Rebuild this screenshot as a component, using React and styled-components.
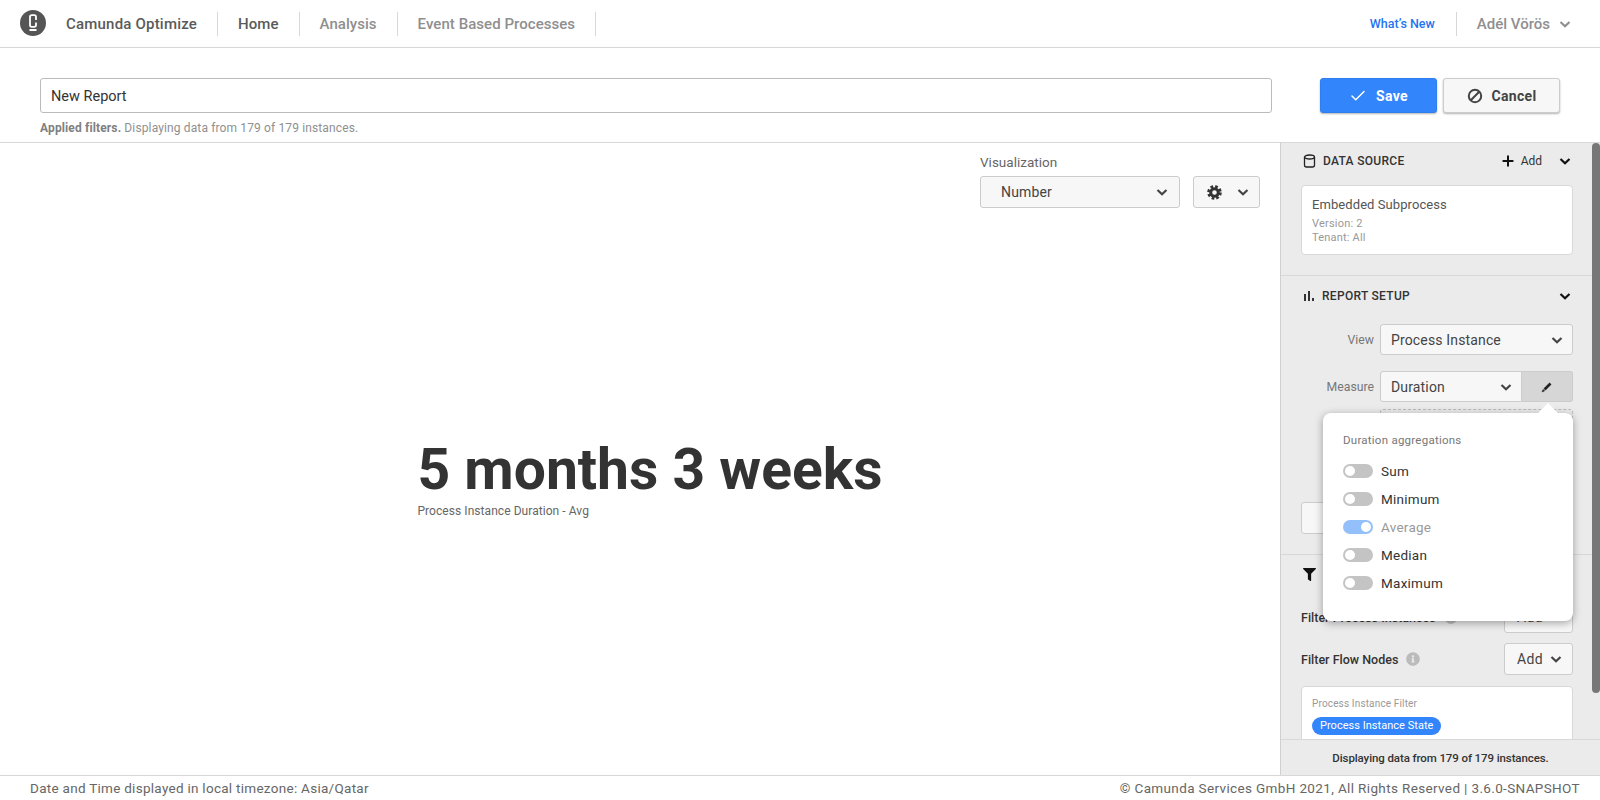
import React from "react";
import styled, { createGlobalStyle } from "styled-components";
import { Check, Plus } from "lucide-react";
import { FaFilter, FaInfoCircle } from "react-icons/fa";

const GlobalStyle = createGlobalStyle`
    * { box-sizing: border-box; }
    html, body { margin: 0; padding: 0; height: 100%; }
    body {
        font-family: Roboto, "Noto Sans", sans-serif;
        color: #333;
        background: #fff;
        overflow: hidden;
    }
`;

const Page = styled.div`
    display: flex;
    flex-direction: column;
    height: 800px;
`,
Header = styled.header`
    display: flex;
    align-items: center;
    height: 48px;
    flex: none;
    border-bottom: 1px solid #d8d8d8;
    padding: 0 28px 0 20px;
`,
Logo = styled.svg`
    width: 26px;
    height: 26px;
    margin-right: 20px;
    margin-top: -2px;
`,
Brand = styled.span`
    font-size: 15px;
    font-weight: 500;
    color: #5a5a5a;
    padding-right: 20px;
    letter-spacing: .2px;
`,
NavItem = styled.a`
    display: flex;
    align-items: center;
    height: 24px;
    padding: 0 20px;
    border-left: 1px solid #d8d8d8;
    font-size: 15px;
    font-weight: 500;
    letter-spacing: .05px;
    color: ${p => (p.$active ? "#5a5a5a" : "#8f8f8f")};
    &:last-of-type { border-right: 1px solid #d8d8d8; }
`,
HeaderRight = styled.div`
    margin-left: auto;
    display: flex;
    align-items: center;
`,
WhatsNew = styled.a`
    color: #1f74f0;
    font-size: 12.5px;
    font-weight: 500;
    padding-right: 21px;
`,
UserMenu = styled.div`
    display: flex;
    align-items: center;
    gap: 8px;
    height: 24px;
    padding-left: 20px;
    border-left: 1px solid #d8d8d8;
    font-size: 15px;
    font-weight: 500;
    color: #8f8f8f;
`,
ReportBar = styled.div`
    display: flex;
    flex: none;
    height: 95px;
    padding: 30px 40px 0;
    border-bottom: 1px solid #d8d8d8;
`,
NameColumn = styled.div`
    flex: 1;
    margin-right: 48px;
`,
NameInput = styled.div`
    height: 35px;
    display: flex;
    align-items: center;
    padding: 1px 10px 0;
    font-size: 14.5px;
    color: #333;
    border: 1px solid #bbb;
    border-radius: 3px;
`,
AppliedNote = styled.div`
    margin-top: 8px;
    font-size: 12px;
    letter-spacing: .13px;
    color: #8f8f8f;
    b { font-weight: 700; color: #808080; }
`,
Button = styled.button`
    display: flex;
    align-items: center;
    justify-content: center;
    gap: 9px;
    width: 117px;
    height: 35px;
    margin-left: ${p => (p.$primary ? "0" : "6px")};
    font: 700 14px Roboto, sans-serif;
    letter-spacing: .3px;
    color: ${p => (p.$primary ? "#fff" : "#444")};
    background: ${p => (p.$primary ? "#3385fb" : "#f7f7f7")};
    border: 1px solid ${p => (p.$primary ? "#2f7ff0" : "#ccc")};
    border-radius: 3px;
    box-shadow: 0 1px 2px rgba(0, 0, 0, .3);
`,
Main = styled.div`
    flex: 1;
    display: flex;
    min-height: 0;
`,
Canvas = styled.div`
    flex: 1;
    display: flex;
    flex-direction: column;
    padding: 9px 20px 0;
    min-width: 0;
`,
VizControls = styled.div`
    align-self: flex-end;
    display: grid;
    grid-template-columns: 200px 67px;
    column-gap: 13px;
`,
VizLabel = styled.label`
    grid-column: 1 / 3;
    font-size: 13.5px;
    color: #666;
    height: 24px;
    line-height: 20px;
`,
Select = styled.div`
    display: flex;
    align-items: center;
    justify-content: space-between;
    height: ${p => p.$h || 31}px;
    flex: 1;
    padding: 0 ${p => p.$pr || 8}px 0 ${p => p.$pl || 10}px;
    font-size: 14px;
    letter-spacing: .15px;
    color: #444;
    background: #f7f7f7;
    border: 1px solid #ccc;
    border-radius: ${p => p.$radius || "3px"};
`,
NumberBlock = styled.div`
    align-self: center;
    margin: 232px 0 0 20px;
`,
BigNumber = styled.div`
    font-size: 57px;
    line-height: 60px;
    font-weight: 700;
    color: #333;
`,
NumberLabel = styled.div`
    margin-top: 4px;
    font-size: 12px;
    letter-spacing: .06px;
    color: #666;
`,
Sidebar = styled.aside`
    position: relative;
    flex: none;
    width: 320px;
    display: flex;
    flex-direction: column;
    background: #ebebeb;
    border-left: 1px solid #d0d0d0;
`,
ScrollArea = styled.div`
    flex: 1;
    display: flex;
    min-height: 0;
`,
Sections = styled.div`
    flex: 1;
    min-width: 0;
    overflow: hidden;
`,
Track = styled.div`
    flex: none;
    width: 8px;
`,
Thumb = styled.div`
    width: 8px;
    height: 550px;
    background: #777;
    border-radius: 4px;
`,
Section = styled.section`
    padding: ${p => p.$pt || 8}px 19px 20px 20px;
    border-bottom: 1px solid #d8d8d8;
    &:last-child { border-bottom: none; }
`,
SectionHead = styled.div`
    display: flex;
    align-items: center;
    height: 20px;
    margin-bottom: ${p => p.$mb || 14}px;
    font-size: 12px;
    font-weight: 500;
    color: #333;
    padding-left: 2px;
    svg { flex: none; }
`,
HeadTitle = styled.span`
    margin-left: 7px;
    letter-spacing: .3px;
`,
HeadAdd = styled.span`
    margin-left: auto;
    display: flex;
    align-items: center;
    gap: 5px;
    font-weight: 400;
    font-size: 12px;
    letter-spacing: 0;
    margin-right: 16px;
`,
HeadChevron = styled.span`
    display: flex;
    margin-left: ${p => (p.$auto ? "auto" : "0")};
    margin-right: 1px;
`,
SourceCard = styled.div`
    height: 70px;
    padding: 10px;
    background: #fff;
    border: 1px solid #d8d8d8;
    border-radius: 4px;
`,
SourceName = styled.div`
    font-size: 13px;
    color: #555;
    letter-spacing: .08px;
    line-height: 18px;
    margin-bottom: 3px;
`,
SourceMeta = styled.div`
    font-size: 11px;
    line-height: 14px;
    letter-spacing: .2px;
    color: #999;
`,
SetupRow = styled.div`
    display: flex;
    align-items: center;
    margin-bottom: 16px;
`,
SetupLabel = styled.span`
    width: 73px;
    margin-right: 6px;
    text-align: right;
    font-size: 12.25px;
    color: #777;
`,
PencilButton = styled.div`
    flex: none;
    width: 51px;
    height: 31px;
    display: flex;
    align-items: center;
    justify-content: center;
    background: #d6d6d6;
    border: 1px solid #ccc;
    border-left: none;
    border-radius: 0 3px 3px 0;
`,
DashedBox = styled.div`
    height: 78px;
    margin: -9px 0 15px 79px;
    border: 1px dashed #bbb;
    border-radius: 3px;
`,
HiddenButton = styled.div`
    height: 32px;
    background: #f7f7f7;
    border: 1px solid #ccc;
    border-radius: 3px;
`,
FilterRow = styled.div`
    display: flex;
    align-items: center;
    justify-content: space-between;
    height: 32px;
    margin-bottom: 10px;
    font-size: 12.5px;
    font-weight: 500;
    color: #333;
`,
FilterName = styled.span`
    display: flex;
    align-items: center;
    gap: 8px;
    svg { color: #bbb; }
`,
AddSelect = styled.div`
    width: 69px;
    height: 32px;
    display: flex;
    align-items: center;
    justify-content: space-between;
    padding: 0 9px 0 12px;
    font-size: 14px;
    font-weight: 400;
    letter-spacing: .3px;
    color: #444;
    background: #f7f7f7;
    border: 1px solid #ccc;
    border-radius: 3px;
`,
FilterCard = styled.div`
    margin-top: 11px;
    padding: 10px;
    height: 90px;
    background: #fff;
    border: 1px solid #d8d8d8;
    border-radius: 4px;
`,
FilterCardTitle = styled.div`
    font-size: 10px;
    line-height: 14px;
    color: #999;
    letter-spacing: .15px;
    margin-bottom: 3px;
`,
Pill = styled.span`
    display: inline-flex;
    align-items: center;
    height: 18px;
    padding: 0 8px;
    border-radius: 9px;
    background: #3385fb;
    color: #fff;
    font-size: 11px;
    letter-spacing: .03px;
`,
SidebarFooter = styled.div`
    flex: none;
    height: 36px;
    display: flex;
    align-items: center;
    justify-content: center;
    border-top: 1px solid #d8d8d8;
    font-size: 11.5px;
    font-weight: 500;
    color: #333;
    letter-spacing: -.1px;
`,
Popover = styled.div`
    position: absolute;
    top: 270px;
    left: 42px;
    width: 250px;
    height: 208px;
    padding: 19px 20px;
    background: #fff;
    border-radius: 8px;
    box-shadow: 0 2px 8px rgba(0, 0, 0, .35);
    &::before {
        content: "";
        position: absolute;
        top: -7px;
        right: 18px;
        width: 14px;
        height: 14px;
        background: #fff;
        transform: rotate(45deg);
    }
`,
PopoverTitle = styled.div`
    font-size: 11.5px;
    line-height: 16px;
    color: #777;
    letter-spacing: .25px;
    margin-bottom: 9px;
`,
SwitchRow = styled.div`
    display: flex;
    align-items: center;
    gap: 8px;
    height: 28px;
    font-size: 13.5px;
    letter-spacing: .25px;
    color: ${p => (p.$on ? "#999" : "#333")};
`,
Switch = styled.span`
    position: relative;
    display: block;
    width: 30px;
    height: 14px;
    border-radius: 7px;
    background: ${p => (p.$on ? "#93c0fa" : "#c4c4c4")};
    &::after {
        content: "";
        position: absolute;
        top: 2px;
        left: ${p => (p.$on ? "18px" : "2px")};
        width: 10px;
        height: 10px;
        border-radius: 50%;
        background: #fff;
    }
`,
Footer = styled.footer`
    flex: none;
    height: 25px;
    display: flex;
    align-items: center;
    justify-content: space-between;
    padding: 0 20px 0 30px;
    border-top: 1px solid #d8d8d8;
    font-size: 13.5px;
    letter-spacing: .28px;
    color: #666;
    span:last-child { letter-spacing: .36px; }
`;

const Chevron = ({ color = "#444" }) => (
    <svg width="14" height="14" viewBox="0 0 14 14" fill="none">
        <path d="M2.5 5l4.5 4.2L11.5 5" stroke={color} strokeWidth="2.2" />
    </svg>
);

const BarsIcon = () => (
    <svg width="12" height="12" viewBox="0 0 12 12" fill="#333">
        <rect x="1" y="4" width="2" height="7" />
        <rect x="5" y="1" width="2" height="10" />
        <rect x="9" y="8" width="2" height="3" />
    </svg>
);

const DatabaseIcon = () => (
    <svg width="13" height="14" viewBox="0 0 13 14" fill="none" stroke="#222" strokeWidth="1.3">
        <ellipse cx="6.5" cy="3" rx="5" ry="2" />
        <path d="M1.5 3v8q0 2 2 2h6q2 0 2-2V3" />
    </svg>
);

const BanIcon = () => (
    <svg width="16" height="16" viewBox="0 0 16 16" fill="none" stroke="#444" strokeWidth="2">
        <circle cx="8" cy="8" r="6.2" />
        <path d="M3.8 12.2l8.4-8.4" />
    </svg>
);

const GearIcon = () => (
    <svg width="15" height="15" viewBox="0 0 15 15" fill="none" stroke="#333">
        <circle cx="7.5" cy="7.5" r="3.8" strokeWidth="3" />
        <circle cx="7.5" cy="7.5" r="6" strokeWidth="2.6" strokeDasharray="2.7 2" />
    </svg>
);

const PencilIcon = () => (
    <svg width="12" height="12" viewBox="0 0 12 12" fill="none" stroke="#222">
        <path d="M3.5 8.5l6-6" strokeWidth="2.6" />
        <path d="M1 11l2.6-1.1-1.5-1.5z" fill="#222" strokeWidth=".5" />
    </svg>
);

const aggregations = [
    { name: "Sum" },
    { name: "Minimum" },
    { name: "Average", on: true },
    { name: "Median" },
    { name: "Maximum" },
];

const App = () => (
    <Page>
        <GlobalStyle />
        <Header>
            <Logo viewBox="0 0 26 26">
                <circle cx="13" cy="13" r="13" fill="#555" />
                <path d="M16 10V7q0-1.8-1.8-1.8h-2.4Q10 5.200 10 7v8q0 1.800 1.800 1.800h2.400Q16 16.800 16 15v-2.500" fill="none" stroke="#fff" strokeWidth="1.8" />
                <rect x="9.500" y="19" width="7" height="2" fill="#fff" />
            </Logo>
            <Brand>Camunda Optimize</Brand>
            <NavItem $active>Home</NavItem>
            <NavItem>Analysis</NavItem>
            <NavItem>Event Based Processes</NavItem>
            <HeaderRight>
                <WhatsNew>What’s New</WhatsNew>
                <UserMenu>Adél Vörös <Chevron color="#8f8f8f" /></UserMenu>
            </HeaderRight>
        </Header>
        <ReportBar>
            <NameColumn>
                <NameInput>New Report</NameInput>
                <AppliedNote><b>Applied filters.</b> Displaying data from 179 of 179 instances.</AppliedNote>
            </NameColumn>
            <Button $primary><Check size={18} strokeWidth={2} /> Save</Button>
            <Button><BanIcon /> Cancel</Button>
        </ReportBar>
        <Main>
            <Canvas>
                <VizControls>
                    <VizLabel>Visualization</VizLabel>
                    <Select $pl={20} $pr={10} $h={32}>Number <Chevron /></Select>
                    <Select $pl={13} $pr={9} $h={32}><GearIcon /> <Chevron /></Select>
                </VizControls>
                <NumberBlock>
                    <BigNumber>5 months 3 weeks</BigNumber>
                    <NumberLabel>Process Instance Duration - Avg</NumberLabel>
                </NumberBlock>
            </Canvas>
            <Sidebar>
                <ScrollArea>
                    <Sections>
                        <Section>
                            <SectionHead>
                                <DatabaseIcon />
                                <HeadTitle>DATA SOURCE</HeadTitle>
                                <HeadAdd><Plus size={16} strokeWidth={3} color="#111" /> Add</HeadAdd>
                                <HeadChevron><Chevron color="#111" /></HeadChevron>
                            </SectionHead>
                            <SourceCard>
                                <SourceName>Embedded Subprocess</SourceName>
                                <SourceMeta>Version: 2</SourceMeta>
                                <SourceMeta>Tenant: All</SourceMeta>
                            </SourceCard>
                        </Section>
                        <Section $pt={10}>
                            <SectionHead $mb={18}>
                                <BarsIcon />
                                <HeadTitle>REPORT SETUP</HeadTitle>
                                <HeadChevron $auto><Chevron color="#111" /></HeadChevron>
                            </SectionHead>
                            <SetupRow>
                                <SetupLabel>View</SetupLabel>
                                <Select>Process Instance <Chevron /></Select>
                            </SetupRow>
                            <SetupRow>
                                <SetupLabel>Measure</SetupLabel>
                                <Select $radius="3px 0 0 3px">Duration <Chevron /></Select>
                                <PencilButton><PencilIcon /></PencilButton>
                            </SetupRow>
                            <DashedBox />
                            <HiddenButton />
                        </Section>
                        <Section $pt={9}>
                            <SectionHead $mb={17}>
                                <FaFilter size={13} color="#111" />
                                <HeadTitle>FILTERS</HeadTitle>
                            </SectionHead>
                            <FilterRow>
                                <FilterName>Filter Process Instances <FaInfoCircle size={14} /></FilterName>
                                <AddSelect>Add <Chevron /></AddSelect>
                            </FilterRow>
                            <FilterRow>
                                <FilterName>Filter Flow Nodes <FaInfoCircle size={14} /></FilterName>
                                <AddSelect>Add <Chevron /></AddSelect>
                            </FilterRow>
                            <FilterCard>
                                <FilterCardTitle>Process Instance Filter</FilterCardTitle>
                                <Pill>Process Instance State</Pill>
                            </FilterCard>
                        </Section>
                    </Sections>
                    <Track><Thumb /></Track>
                </ScrollArea>
                <SidebarFooter>Displaying data from 179 of 179 instances.</SidebarFooter>
                <Popover>
                    <PopoverTitle>Duration aggregations</PopoverTitle>
                    {aggregations.map(a => (
                        <SwitchRow key={a.name} $on={a.on}>
                            <Switch $on={a.on} />
                            {a.name}
                        </SwitchRow>
                    ))}
                </Popover>
            </Sidebar>
        </Main>
        <Footer>
            <span>Date and Time displayed in local timezone: Asia/Qatar</span>
            <span>© Camunda Services GmbH 2021, All Rights Reserved | 3.6.0-SNAPSHOT</span>
        </Footer>
    </Page>
);

export default App;
